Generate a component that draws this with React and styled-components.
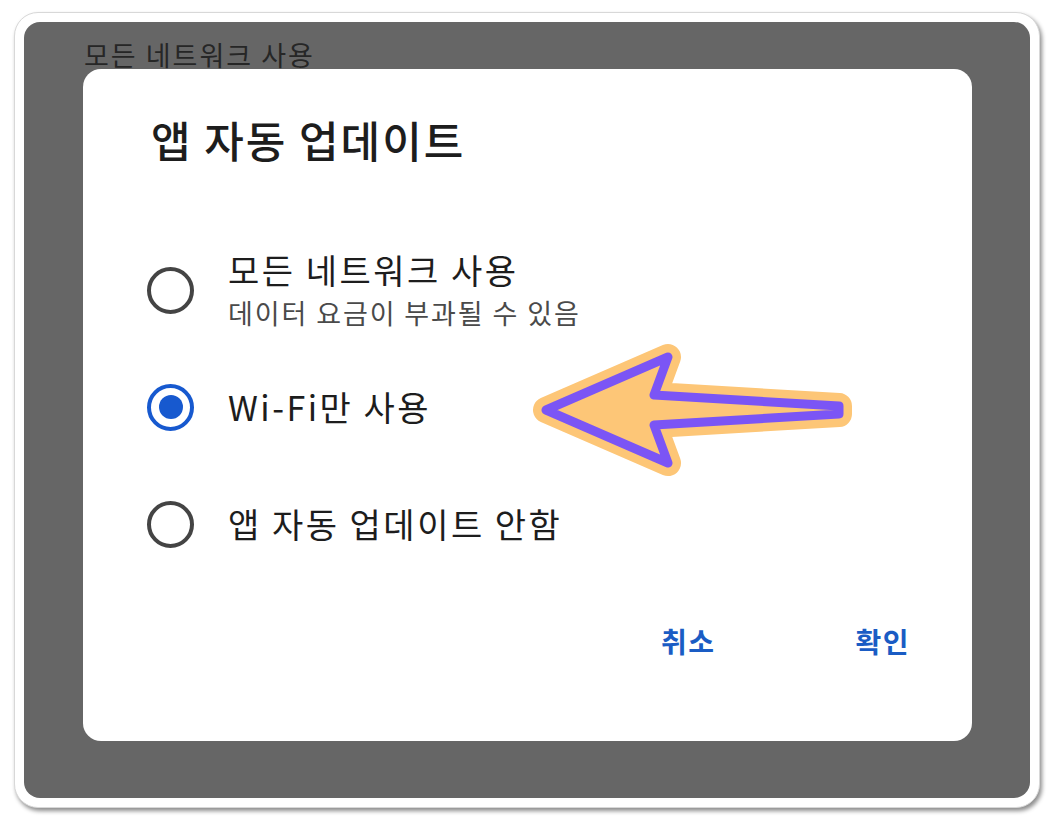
import React from "react";
import styled, { createGlobalStyle } from "styled-components";

const GlobalStyle = createGlobalStyle`
  html, body {
    margin: 0;
    padding: 0;
    background: #ffffff;
  }
  body {
    font-family: "Noto Sans CJK KR", "Noto Sans", sans-serif;
  }
`;

const Page = styled.div`
  width: 1054px;
  height: 823px;
  padding: 12px 0 0 14px;
  box-sizing: border-box;
`;

const Frame = styled.div`
  width: 1026px;
  height: 796px;
  box-sizing: border-box;
  padding: 9px;
  background: #fff;
  border-radius: 24px;
  border: 1px solid #d8d8d8;
  box-shadow: 2px 3px 4px rgba(0, 0, 0, 0.45);
`;

const Screen = styled.div`
  position: relative;
  height: 100%;
  background: #666666;
  border-radius: 16px;
  overflow: hidden;
  padding: 17px 0 0 60px;
  box-sizing: border-box;
`;

const BehindText = styled.div`
  font-size: 27px;
  letter-spacing: 2px;
  color: #262626;
  line-height: 1.2;
`;

const Dialog = styled.div`
  position: absolute;
  left: 59px;
  top: 47px;
  width: 889px;
  height: 672px;
  background: #ffffff;
  border-radius: 18px;
  box-sizing: border-box;
  padding: 40px 62px 0 64px;
  display: flex;
  flex-direction: column;
`;

const Title = styled.h1`
  margin: 0 0 0 4px;
  font-size: 43px;
  font-weight: 500;
  letter-spacing: 2px;
  color: #1d1d1d;
  line-height: 60px;
`;

const Options = styled.div`
  display: flex;
  flex-direction: column;
  margin-top: 72px;
`;

const Option = styled.div`
  display: flex;
  align-items: center;
  gap: 34px;
  height: ${(p) => p.$h}px;
`;

const Radio = styled.span`
  flex: none;
  width: 47px;
  height: 47px;
  box-sizing: border-box;
  border-radius: 50%;
  border: 4.5px solid ${(p) => (p.$on ? "#1759cf" : "#444444")};
  display: flex;
  align-items: center;
  justify-content: center;
  &::after {
    content: "";
    display: ${(p) => (p.$on ? "block" : "none")};
    width: 24px;
    height: 24px;
    border-radius: 50%;
    background: #1759cf;
  }
`;

const LabelBox = styled.div`
  display: flex;
  flex-direction: column;
`;

const Label = styled.div`
  font-size: 34px;
  letter-spacing: 2.5px;
  color: #1d1d1d;
  line-height: 46px;
`;

const Sub = styled.div`
  font-size: 27px;
  letter-spacing: 1.9px;
  color: #4a4a4a;
  line-height: 40px;
`;

const Actions = styled.div`
  display: flex;
  justify-content: flex-end;
  gap: 140px;
  margin-top: 48px;
`;

const ActionButton = styled.button`
  border: none;
  background: none;
  padding: 0;
  font-family: inherit;
  font-size: 28px;
  font-weight: 700;
  letter-spacing: 1.5px;
  color: #1a5cc4;
  line-height: 40px;
`;

const ArrowSvg = styled.svg`
  position: absolute;
  left: 440px;
  top: 260px;
  overflow: visible;
`;

const Arrow = () => {
  const pts = "23,81 145,28 131,66 316,77 316,85 131,96 145,134";
  return (
    <ArrowSvg width="350" height="160" viewBox="0 0 350 160">
      <polygon
        points={pts}
        fill="#fdc677"
        stroke="#fdc677"
        strokeWidth="26"
        strokeLinejoin="round"
      />
      <polygon
        points={pts}
        fill="#fdc677"
        stroke="#7b55f5"
        strokeWidth="9"
        strokeLinejoin="round"
      />
    </ArrowSvg>
  );
};

export default function App() {
  return (
    <>
      <GlobalStyle />
      <Page>
        <Frame>
          <Screen>
            <BehindText>모든 네트워크 사용</BehindText>
            <Dialog>
              <Title>앱 자동 업데이트</Title>
              <Options>
                <Option $h={98}>
                  <Radio />
                  <LabelBox>
                    <Label>모든 네트워크 사용</Label>
                    <Sub>데이터 요금이 부과될 수 있음</Sub>
                  </LabelBox>
                </Option>
                <Option $h={136}>
                  <Radio $on />
                  <Label>Wi-Fi만 사용</Label>
                </Option>
                <Option $h={98}>
                  <Radio />
                  <Label>앱 자동 업데이트 안함</Label>
                </Option>
              </Options>
              <Actions>
                <ActionButton>취소</ActionButton>
                <ActionButton>확인</ActionButton>
              </Actions>
              <Arrow />
            </Dialog>
          </Screen>
        </Frame>
      </Page>
    </>
  );
}
